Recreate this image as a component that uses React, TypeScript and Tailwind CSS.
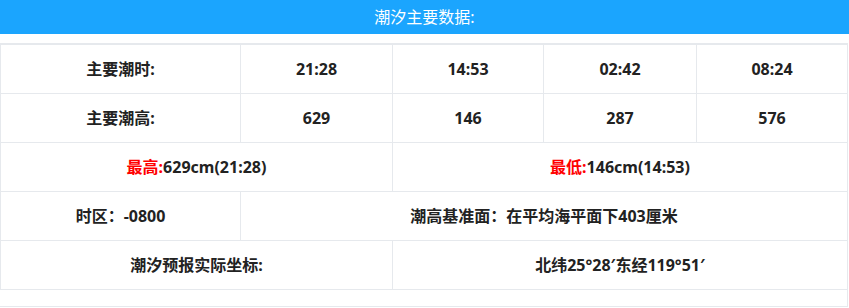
import React from "react";

const font = { fontFamily: '"Noto Sans", "Noto Sans CJK SC", sans-serif' };

export default function App() {
  const td = "border border-[#e6e9ed] text-center align-middle h-[49px] p-0";
  return (
    <div className="w-[849px] bg-white text-[#222]" style={font}>
      <div className="h-[34px] bg-[#1ba5fe] text-white text-[16px] flex items-center justify-center">
        潮汐主要数据:
      </div>
      <div className="mt-[9px] w-[848px] border-t border-r border-b border-[#e6e9ed] pb-[16px]">
        <table className="w-[847px] border-collapse table-fixed font-bold text-[16px]">
          <colgroup>
            <col className="w-[240px]" />
            <col className="w-[152px]" />
            <col className="w-[151px]" />
            <col className="w-[153px]" />
            <col className="w-[151px]" />
          </colgroup>
          <tbody>
            <tr>
              <td className={td}>主要潮时:</td>
              <td className={td}>21:28</td>
              <td className={td}>14:53</td>
              <td className={td}>02:42</td>
              <td className={td}>08:24</td>
            </tr>
            <tr>
              <td className={td}>主要潮高:</td>
              <td className={td}>629</td>
              <td className={td}>146</td>
              <td className={td}>287</td>
              <td className={td}>576</td>
            </tr>
            <tr>
              <td className={td} colSpan={2}>
                <span className="text-[#ff0000]">最高:</span>629cm(21:28)
              </td>
              <td className={td} colSpan={3}>
                <span className="text-[#ff0000]">最低:</span>146cm(14:53)
              </td>
            </tr>
            <tr>
              <td className={td}>时区：-0800</td>
              <td className={td} colSpan={4}>
                潮高基准面：在平均海平面下403厘米
              </td>
            </tr>
            <tr>
              <td className={td} colSpan={2}>潮汐预报实际坐标:</td>
              <td className={td} colSpan={3}>北纬25°28′东经119°51′</td>
            </tr>
          </tbody>
        </table>
      </div>
    </div>
  );
}
